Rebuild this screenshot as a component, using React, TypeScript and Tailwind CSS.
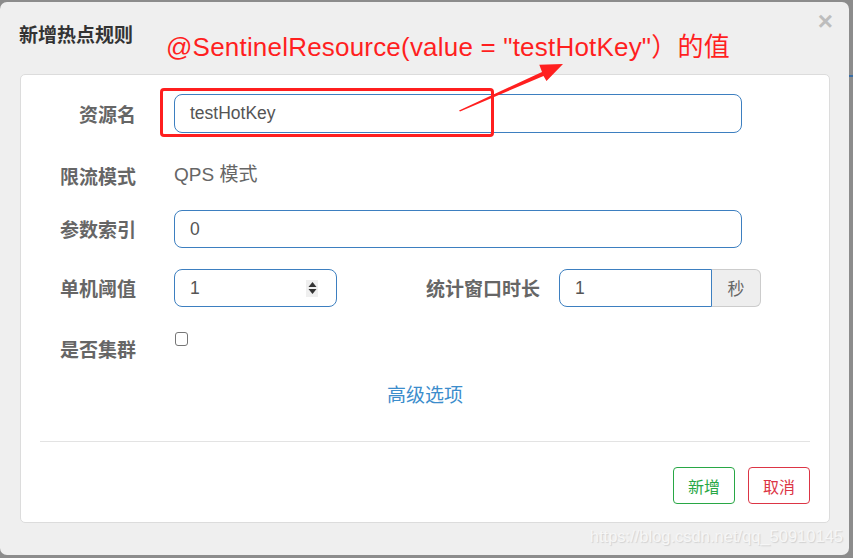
const labelCls =
  "w-[115px] shrink-0 text-right text-[19px] font-bold text-[#666] leading-6 font-['Noto_Sans_CJK_SC',sans-serif]"
const inputCls =
  "h-[39px] border border-[#3d7fc0] rounded-[8px] px-[15px] flex items-center text-[17.5px] text-[#555]"

function Spinner() {
  return (
    <div className="w-[12px] h-[17px] bg-[#efefef] flex items-center justify-center">
      <svg width="9" height="14" viewBox="0 0 9 14">
        <path d="M4.5 1 L8.5 6 L0.5 6 Z" fill="#333" />
        <path d="M4.5 13 L8.5 8 L0.5 8 Z" fill="#333" />
      </svg>
    </div>
  )
}

export default function App() {
  return (
    <div className="w-[853px] h-[558px] bg-[#8c8c8c] pt-[2px] flex font-['Liberation_Sans','Noto_Sans_CJK_SC',sans-serif]">
      <div className="relative w-[849px] h-[553px] bg-[#efefef] rounded-[7px] flex flex-col">
        {/* header */}
        <div className="h-[64px] pl-[19px] pr-[16px] flex items-center justify-between">
          <span className="text-[19px] font-bold text-[#333] font-['Noto_Sans_CJK_SC',sans-serif]">新增热点规则</span>
          <span className="text-[26px] font-bold text-[#bdbdbd] leading-none -mt-[26px]">×</span>
        </div>

        {/* form card */}
        <div className="ml-[20px] mt-[8px] w-[810px] h-[449px] bg-white border border-[#dcdcdc] rounded-[5px] flex flex-col">
          <div className="flex items-center mt-[19px] h-[39px]">
            <div className={labelCls}>资源名</div>
            <div className={`${inputCls} ml-[38px] w-[568px]`}>testHotKey</div>
          </div>

          <div className="flex items-center mt-[23px] h-[39px]">
            <div className={labelCls}>限流模式</div>
            <div className="ml-[38px] text-[19px] text-[#666]">QPS 模式</div>
          </div>

          <div className="flex items-center mt-[15px] h-[38px]">
            <div className={labelCls}>参数索引</div>
            <div className={`${inputCls} ml-[38px] w-[568px] !h-[38px]`}>0</div>
          </div>

          <div className="flex items-center mt-[21px] h-[38px]">
            <div className={labelCls}>单机阈值</div>
            <div className={`${inputCls} ml-[38px] w-[163px] !h-[38px] justify-between !pr-[18px]`}>
              <span>1</span>
              <Spinner />
            </div>
            <div className="w-[203px] text-right text-[19px] font-bold text-[#666] font-['Noto_Sans_CJK_SC',sans-serif]">
              统计窗口时长
            </div>
            <div className="ml-[19px] flex h-[38px]">
              <div className="w-[153px] h-full border border-[#3d7fc0] rounded-l-[8px] px-[15px] flex items-center text-[17.5px] text-[#555]">
                1
              </div>
              <div className="w-[49px] h-full bg-[#eeeeee] border border-l-0 border-[#cccccc] rounded-r-[6px] flex items-center justify-center text-[17px] text-[#666] font-['Noto_Sans_CJK_SC',sans-serif]">
                秒
              </div>
            </div>
          </div>

          <div className="flex items-start mt-[19px]">
            <div className={`${labelCls} pt-[11px]`}>是否集群</div>
            <div className="ml-[39px] mt-[6px] w-[13px] h-[14px] border border-[#767676] rounded-[3px] bg-white" />
          </div>

          <div className="mt-[19px] text-center text-[19px] text-[#3c8dcc] font-['Noto_Sans_CJK_SC',sans-serif]">
            高级选项
          </div>

          <div className="mt-[32px] mx-[19px] border-t border-[#e3e3e3]" />

          <div className="mt-auto mb-[18px] mr-[19px] flex justify-end gap-[13px]">
            <button className="w-[62px] h-[37px] border border-[#28a745] rounded-[4px] text-[16px] text-[#28a745] font-['Noto_Sans_CJK_SC',sans-serif]">
              新增
            </button>
            <button className="w-[62px] h-[37px] border border-[#dc3545] rounded-[4px] text-[16px] text-[#dc3545] font-['Noto_Sans_CJK_SC',sans-serif]">
              取消
            </button>
          </div>
        </div>

        {/* watermark */}
        <div className="absolute right-[6px] bottom-[6px] text-[16.5px] text-[#f6f6f6] [text-shadow:1px_1px_1px_#d2d2d2]">
          https://blog.csdn.net/qq_50910145
        </div>

        {/* annotation overlay */}
        <div className="absolute left-[166px] top-[27px] text-[26px] tracking-[0.2px] leading-[36px] text-[#ff1f1f] whitespace-nowrap font-['Liberation_Sans','Noto_Sans_CJK_SC',sans-serif]">
          @SentinelResource(value = "testHotKey"）的值
        </div>
        <div className="absolute left-[160px] top-[86px] w-[334px] h-[49px] border-[3.5px] border-[#ff1f1f] rounded-[4px]" />
        <svg className="absolute left-0 top-0" width="849" height="553" viewBox="0 2 849 553">
          <polygon
            points="459,110.5 542,72 539.3,64.7 563,64 546.5,81.1 543.5,76 460,111.5"
            fill="#ff1f1f"
          />
        </svg>
      </div>
      <div className="w-[4px] h-[553px] flex flex-col">
        <div className="h-[73px]" />
        <div className="h-[2px] bg-[#3a6ea5]" />
      </div>
    </div>
  )
}
